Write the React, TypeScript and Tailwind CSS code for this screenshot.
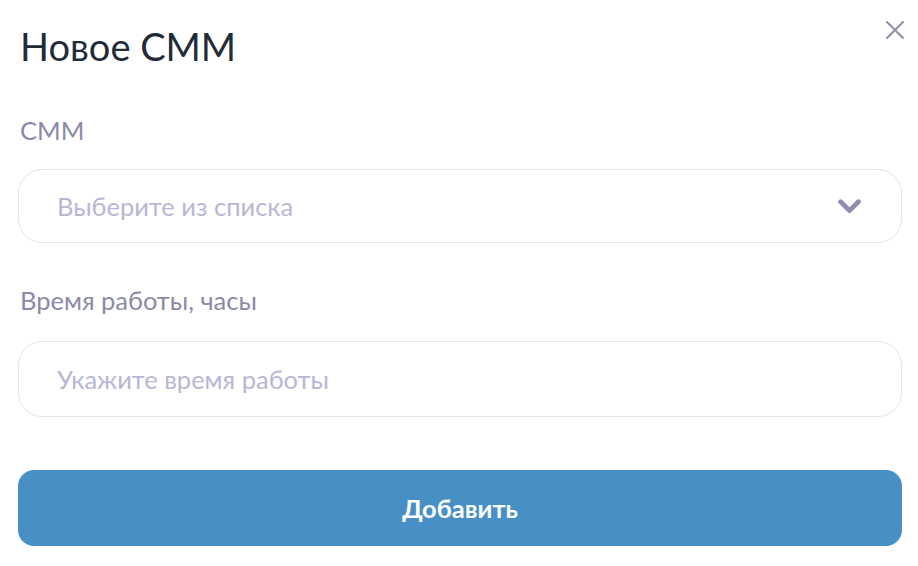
import React from "react";

export default function App() {
  return (
    <div className="w-[918px] h-[566px] bg-white relative" style={{ fontFamily: "Lato, 'Noto Sans', sans-serif" }}>
      <button className="absolute left-[886px] top-[21px] w-[18px] h-[18px]" aria-label="close">
        <svg width="18" height="18" viewBox="0 0 18 18" fill="none" stroke="#8e8eaf" strokeWidth="2" strokeLinecap="round">
          <path d="M1 1L17 17M17 1L1 17" />
        </svg>
      </button>
      <div className="flex flex-col pl-[18px] pr-[16px] pt-[22px]">
        <h1 className="text-[38px] leading-[48px] text-[#222b38] pl-[2px]">Новое СММ</h1>
        <label className="mt-[45px] text-[25.5px] leading-[30px] text-[#8a8aa8] pl-[2px]">СММ</label>
        <div className="mt-[24px] h-[74px] rounded-[24px] border border-[#dce8ee] flex items-center justify-between pl-[38px] pr-[40px]">
          <span className="text-[25.5px] text-[#b7b7d5]">Выберите из списка</span>
          <svg width="23" height="15" viewBox="0 0 23 15" fill="none" stroke="#8e8eaf" strokeWidth="4.8" strokeLinecap="round" strokeLinejoin="round">
            <path d="M2.6 2.8L11.5 11.6L20.4 2.8" />
          </svg>
        </div>
        <label className="mt-[42px] text-[25.5px] leading-[30px] text-[#8a8aa8] pl-[2px]">Время работы, часы</label>
        <div className="mt-[26px] h-[76px] rounded-[24px] border border-[#dce8ee] flex items-center pl-[38px]">
          <span className="text-[25.5px] text-[#b7b7d5]">Укажите время работы</span>
        </div>
        <button className="mt-[53px] h-[76px] rounded-[16px] bg-[#478fc4] text-white text-[25.5px] font-bold">Добавить</button>
      </div>
    </div>
  );
}
